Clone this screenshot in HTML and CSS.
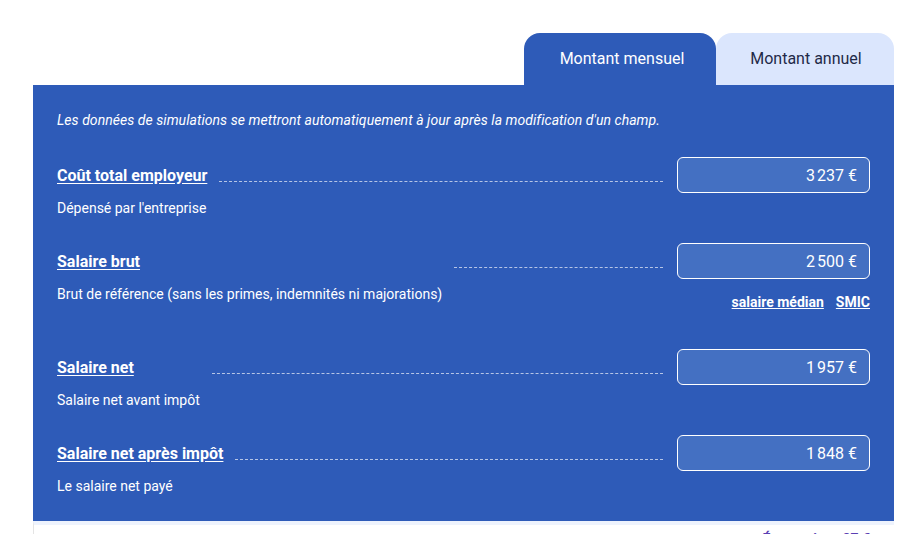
FILE: index.html
```html
<!DOCTYPE html>
<html lang="fr">
<head>
<meta charset="utf-8">
<link rel="stylesheet" href="styles.css">
</head>
<body>
<div class="wrap">
  <div class="tabs">
    <div class="tab active">Montant mensuel</div>
    <div class="tab annual">Montant annuel</div>
  </div>
  <div class="panel">
    <p class="intro">Les données de simulations se mettront automatiquement à jour après la modification d'un champ.</p>

    <div class="field">
      <div class="left">
        <a class="label">Coût total employeur</a>
        <div class="desc">Dépensé par l'entreprise</div>
      </div>
      <div class="dots"></div>
      <div class="right">
        <div class="input">3&#8239;237 €</div>
      </div>
    </div>

    <div class="field">
      <div class="left">
        <a class="label">Salaire brut</a>
        <div class="desc">Brut de référence (sans les primes, indemnités ni majorations)</div>
      </div>
      <div class="dots"></div>
      <div class="right">
        <div class="input">2&#8239;500 €</div>
        <div class="links"><a>salaire médian</a><a>SMIC</a></div>
      </div>
    </div>

    <div class="field">
      <div class="left">
        <a class="label">Salaire net</a>
        <div class="desc">Salaire net avant impôt</div>
      </div>
      <div class="dots"></div>
      <div class="right">
        <div class="input">1&#8239;957 €</div>
      </div>
    </div>

    <div class="field last">
      <div class="left">
        <a class="label">Salaire net après impôt</a>
        <div class="desc">Le salaire net payé</div>
      </div>
      <div class="dots"></div>
      <div class="right">
        <div class="input">1&#8239;848 €</div>
      </div>
    </div>
  </div>
  <div class="footer">
    <span class="save">Économisez 87 €</span>
  </div>
</div>
</body>
</html>
```
FILE: styles.css
```css
html, body {
  margin: 0;
  padding: 0;
  background: #ffffff;
  font-family: Roboto, "Noto Sans", sans-serif;
  overflow: hidden;
}

.wrap {
  width: 861px;
  margin-left: 33px;
  padding-top: 33px;
}

.tabs {
  display: flex;
  justify-content: flex-end;
}

.tab {
  box-sizing: border-box;
  width: 192px;
  height: 52px;
  padding: 0 0 1px 4px;
  display: flex;
  align-items: center;
  justify-content: center;
  font-size: 16px;
  color: #1f2a48;
  background: #dbe6fd;
  border-radius: 16px 16px 0 0;
}

.tab.annual {
  width: 178px;
  padding-left: 2px;
}

.tab.active {
  background: #2e5bb8;
  color: #ffffff;
}

.panel {
  background: #2e5bb8;
  color: #ffffff;
  padding: 25px 24px 25px 24px;
}

.intro {
  margin: 0 0 27px 0;
  font-size: 14px;
  font-style: italic;
  line-height: 20px;
  letter-spacing: 0.05px;
}

.field {
  display: flex;
  align-items: flex-start;
  margin-bottom: 25px;
}

.field.last {
  margin-bottom: 0;
}

.left {
  display: flex;
  flex-direction: column;
  align-items: flex-start;
}

.label {
  font-size: 16px;
  font-weight: 700;
  line-height: 36px;
  padding-top: 1px;
  text-decoration: underline;
  text-underline-offset: 2px;
  color: #ffffff;
}

.desc {
  margin-top: 4px;
  font-size: 14px;
  line-height: 20px;
}

.dots {
  flex: 1;
  height: 24px;
  margin: 0 14px 0 12px;
  border-bottom: 1px dashed rgba(255, 255, 255, 0.65);
}

.right {
  width: 193px;
  display: flex;
  flex-direction: column;
  align-items: flex-end;
}

.input {
  box-sizing: border-box;
  width: 193px;
  height: 36px;
  border: 1px solid #ffffff;
  border-radius: 6px;
  background: #4470c2;
  padding-right: 12px;
  display: flex;
  align-items: center;
  justify-content: flex-end;
  font-size: 16px;
}

.links {
  display: flex;
  gap: 12px;
  padding: 13px 0 12px;
  line-height: 20px;
  font-size: 14px;
  font-weight: 700;
}

.links a {
  text-decoration: underline;
  color: #ffffff;
}

.footer {
  border-top: 4px solid #eef3fd;
  border-left: 1px solid #e4e4e4;
  display: flex;
  justify-content: flex-end;
  padding: 4px 24px 0 0;
  height: 40px;
}

.save {
  font-size: 14px;
  font-weight: 700;
  color: #5b3fb3;
  line-height: 20px;
}
```
